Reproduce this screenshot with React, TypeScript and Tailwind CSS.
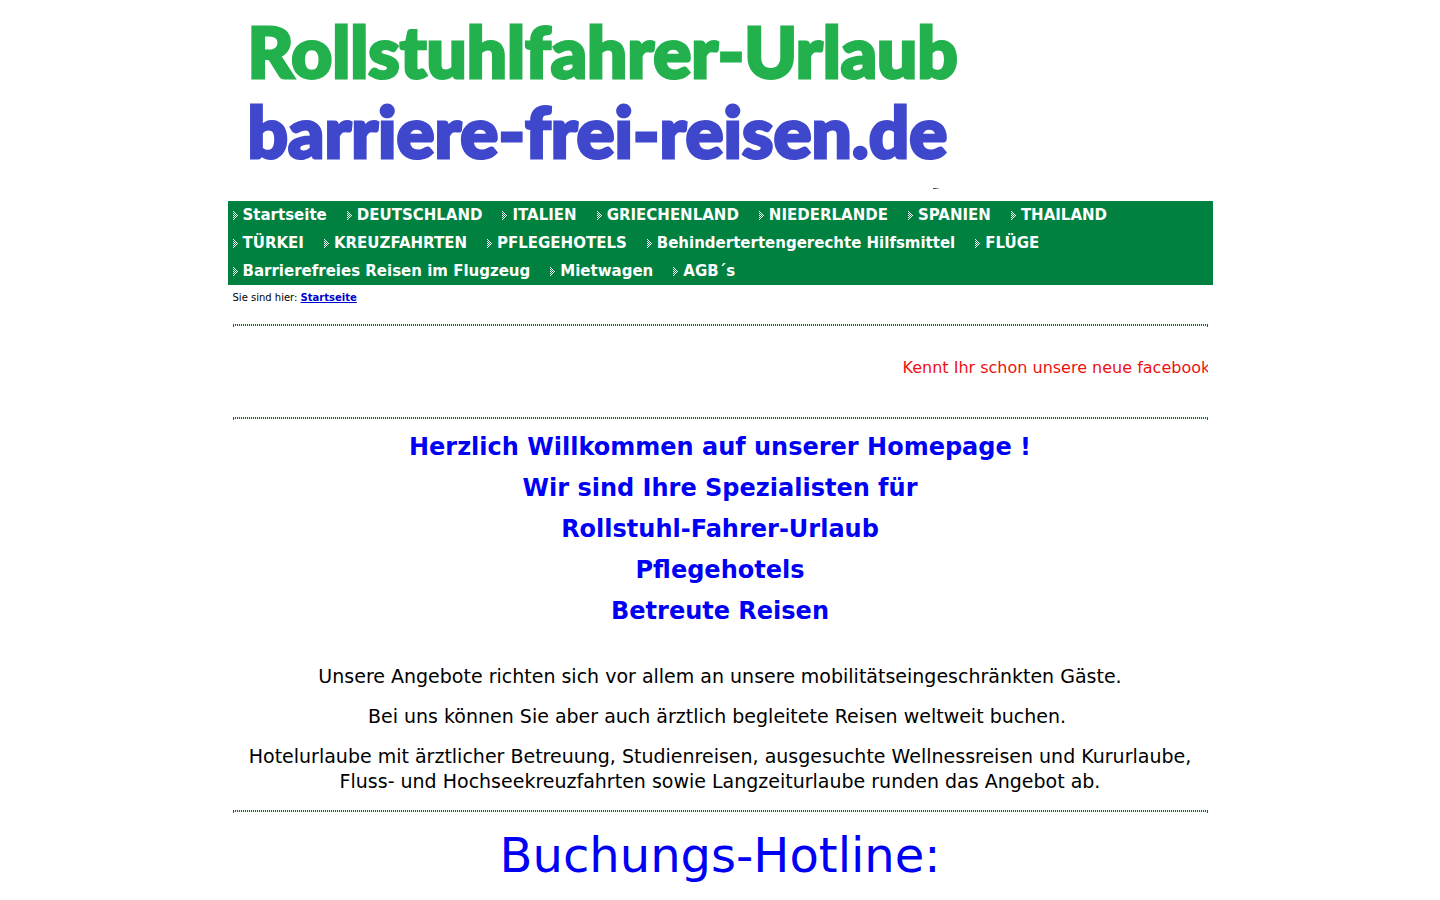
import React from 'react';

interface NavEntry {
  label: string;
  href: string;
}

const navEntries: NavEntry[] = [
  { label: 'Startseite', href: '#startseite' },
  { label: 'DEUTSCHLAND', href: '#deutschland' },
  { label: 'ITALIEN', href: '#italien' },
  { label: 'GRIECHENLAND', href: '#griechenland' },
  { label: 'NIEDERLANDE', href: '#niederlande' },
  { label: 'SPANIEN', href: '#spanien' },
  { label: 'THAILAND', href: '#thailand' },
  { label: 'TÜRKEI', href: '#tuerkei' },
  { label: 'KREUZFAHRTEN', href: '#kreuzfahrten' },
  { label: 'PFLEGEHOTELS', href: '#pflegehotels' },
  { label: 'Behindertertengerechte Hilfsmittel', href: '#hilfsmittel' },
  { label: 'FLÜGE', href: '#fluege' },
  { label: 'Barrierefreies Reisen im Flugzeug', href: '#flugzeug' },
  { label: 'Mietwagen', href: '#mietwagen' },
  { label: 'AGB´s', href: '#agb' },
];

const welcomeLines = [
  'Herzlich Willkommen auf unserer Homepage !',
  'Wir sind Ihre Spezialisten für',
  'Rollstuhl-Fahrer-Urlaub',
  'Pflegehotels',
  'Betreute Reisen',
];

// Dithered arrow: every other pixel of a small triangle
const arrowPixels = [
  [0, 0],
  [1, 1],
  [0, 2], [2, 2],
  [1, 3], [3, 3],
  [0, 4], [2, 4], [4, 4],
  [1, 5], [3, 5],
  [0, 6], [2, 6],
  [1, 7],
  [0, 8],
];

const NavArrow = () => (
  <svg width="5" height="9" viewBox="0 0 5 9" shapeRendering="crispEdges" aria-hidden="true">
    {arrowPixels.map(([x, y]) => (
      <rect key={`${x}-${y}`} x={x} y={y} width="1" height="1" fill="#ffffff" />
    ))}
  </svg>
);

// Dotted green rule with a small tick at each end
const Divider = () => (
  <hr className="h-[3px] border-0 border-x border-solid border-x-[#008000] bg-[repeating-linear-gradient(90deg,#e8f8e8_0_1px,#008000_1px_2px)] bg-[length:100%_2px] bg-no-repeat" />
);

const App = () => {
  return (
    <div className="min-h-screen bg-white font-['DejaVu_Sans',sans-serif] text-black">
      <div className="mx-auto max-w-[985px]">
        <header className="px-5 pt-[11px] pb-3">
          <h1 className="font-['Lato',sans-serif] font-black leading-[80px]">
            <span className="block whitespace-nowrap text-[71px] text-[#22b14c] [-webkit-text-stroke:3px_#22b14c]">
              Rollstuhlfahrer-Urlaub
            </span>
            <span className="block whitespace-nowrap text-[71px] text-[#3f48cc] [-webkit-text-stroke:3px_#3f48cc]">
              barriere-frei-reisen.de
            </span>
          </h1>
          <div className="mt-[17px] ml-[685px] h-px w-1.5 bg-linear-to-r from-[#333333] to-[#bbbbbb]" />
        </header>

        <nav className="bg-[#008140]">
          <ul className="flex flex-wrap">
            {navEntries.map((entry) => (
              <li key={entry.href} className="pl-[5px] pr-[15px]">
                <a
                  href={entry.href}
                  className="flex h-7 items-center gap-[5px] whitespace-nowrap text-[15px] font-bold text-white"
                >
                  <NavArrow />
                  {entry.label}
                </a>
              </li>
            ))}
          </ul>
        </nav>

        <main className="px-[5px]">
          <p className="pt-[5px] pb-[18px] text-[10px] leading-4">
            Sie sind hier:{' '}
            <a href="#startseite" className="font-bold text-[#0000cc] underline">
              Startseite
            </a>
          </p>

          <Divider />
          <div className="overflow-hidden pt-[31px] pb-10">
            <p className="ml-[670px] whitespace-nowrap text-[16px] leading-[19px] text-[#ee1111]">
              Kennt Ihr schon unsere neue facebook
            </p>
          </div>
          <Divider />

          <section className="pt-[7px] text-center text-2xl font-bold text-[#0000f5]">
            {welcomeLines.map((line) => (
              <h2 key={line} className="leading-[41px]">
                {line}
              </h2>
            ))}
          </section>

          <section className="flex flex-col gap-[15px] pt-8 pb-4 text-center text-[19px] leading-[25px]">
            <p>Unsere Angebote richten sich vor allem an unsere mobilitätseingeschränkten Gäste.</p>
            <p>Bei uns können Sie aber auch ärztlich begleitete Reisen weltweit buchen.&nbsp;</p>
            <p>
              Hotelurlaube mit ärztlicher Betreuung, Studienreisen, ausgesuchte Wellnessreisen und Kururlaube,
              Fluss- und Hochseekreuzfahrten sowie Langzeiturlaube runden das Angebot ab.
            </p>
          </section>

          <Divider />
          <p className="pt-3.5 text-center text-5xl leading-[56px] text-[#0000f5]">Buchungs-Hotline:</p>
        </main>
      </div>
    </div>
  );
};

export default App;
